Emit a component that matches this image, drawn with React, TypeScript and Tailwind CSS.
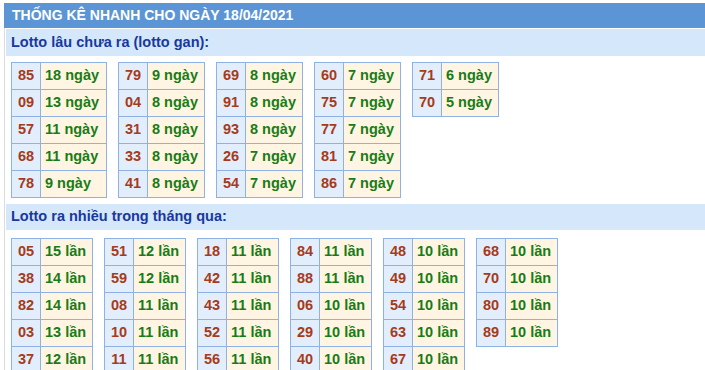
type Row = [string, string];

const ganTables: Row[][] = [
  [["85", "18"], ["09", "13"], ["57", "11"], ["68", "11"], ["78", "9"]],
  [["79", "9"], ["04", "8"], ["31", "8"], ["33", "8"], ["41", "8"]],
  [["69", "8"], ["91", "8"], ["93", "8"], ["26", "7"], ["54", "7"]],
  [["60", "7"], ["75", "7"], ["77", "7"], ["81", "7"], ["86", "7"]],
  [["71", "6"], ["70", "5"]],
];

const nhieuTables: Row[][] = [
  [["05", "15"], ["38", "14"], ["82", "14"], ["03", "13"], ["37", "12"]],
  [["51", "12"], ["59", "12"], ["08", "11"], ["10", "11"], ["11", "11"]],
  [["18", "11"], ["42", "11"], ["43", "11"], ["52", "11"], ["56", "11"]],
  [["84", "11"], ["88", "11"], ["06", "10"], ["29", "10"], ["40", "10"]],
  [["48", "10"], ["49", "10"], ["54", "10"], ["63", "10"], ["67", "10"]],
  [["68", "10"], ["70", "10"], ["80", "10"], ["89", "10"]],
];

function StatTable({ rows, unit, wide }: { rows: Row[]; unit: string; wide: string }) {
  return (
    <div className="border-t border-l border-[#8fb2e4]">
      {rows.map(([num, count]) => (
        <div key={num} className="flex h-[27px]">
          <div className="flex w-[29px] items-center justify-center border-r border-b border-[#8fb2e4] bg-[#e3eefc] text-[#a53b1a]">
            {num}
          </div>
          <div
            className={`flex ${wide} items-center border-r border-b border-[#8fb2e4] bg-[#fff5e2] pl-[4px] text-[#187c16]`}
          >
            {count} {unit}
          </div>
        </div>
      ))}
    </div>
  );
}

function SectionBar({ title, h }: { title: string; h: string }) {
  return (
    <div className={`flex ${h} items-center bg-[#d5e7fb] pl-[5px] text-[14.5px] font-bold text-[#18399b]`}>{title}</div>
  );
}

export default function App() {
  return (
    <div className="h-[370px] w-full overflow-hidden bg-white font-['Liberation_Sans',Arial,sans-serif]">
      <div className="ml-1 pt-[3px]">
        <div className="flex h-[25px] items-center bg-[#5b95d5] pl-2 text-[14px] font-bold text-white">
          THỐNG KÊ NHANH CHO NGÀY 18/04/2021
        </div>
        <div className="h-[400px] border-l border-[#dcdcdc] pt-px pl-px">
          <SectionBar title="Lotto lâu chưa ra (lotto gan):" h="h-[27px]" />
          <div className="mt-[6px] flex items-start gap-[11px] pl-[5px] text-[14.5px] font-bold">
            {ganTables.map((t, i) => (
              <StatTable key={i} rows={t} unit="ngày" wide={i === 0 ? "w-[66px]" : "w-[57px]"} />
            ))}
          </div>
          <div className="mt-[6px]">
            <SectionBar title="Lotto ra nhiều trong tháng qua:" h="h-[26px]" />
          </div>
          <div className="mt-[8px] flex items-start gap-[11px] pl-[5px] text-[14.5px] font-bold">
            {nhieuTables.map((t, i) => (
              <StatTable key={i} rows={t} unit="lần" wide="w-[52px]" />
            ))}
          </div>
        </div>
      </div>
    </div>
  );
}
